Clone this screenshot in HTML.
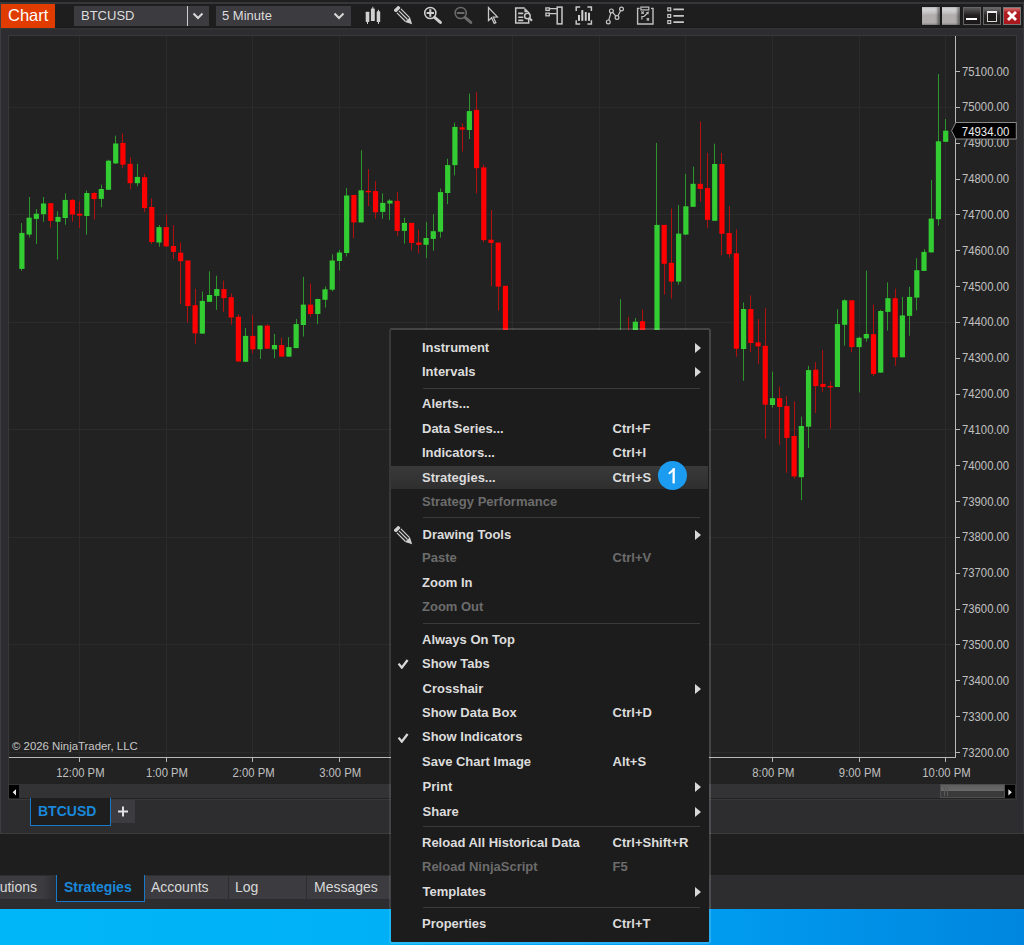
<!DOCTYPE html>
<html><head><meta charset="utf-8">
<style>
*{box-sizing:border-box;margin:0;padding:0}
html,body{width:1024px;height:945px;overflow:hidden;background:#1e1e1e;font-family:"Liberation Sans",sans-serif;position:relative}
.abs{position:absolute}
#top{position:absolute;left:0;top:0;width:1024px;height:3px;background:#1f1f1f}
#topline{position:absolute;left:0;top:2px;width:1024px;height:2px;background:#35363a}
#leftline{position:absolute;left:0;top:2px;width:1px;height:832px;background:#3a3d42}
#toolbar{position:absolute;left:1px;top:4px;width:1022px;height:23px;background:#1e1e1e}
#chartlbl{position:absolute;left:1px;top:3.8px;width:54px;height:24.2px;background:#e03c00;color:#fff;font-size:16.5px;line-height:22.8px;padding-left:7px}
.dd{position:absolute;top:6px;height:20px;background:#3c3b40;color:#dcdcdc;font-size:13px;line-height:20px}
.chev{position:absolute;top:0;width:12px;height:20px}
#panel{position:absolute;left:1px;top:27px;width:1022px;height:806px;background:#2d2d30;border-top:1px solid #1a1a1a;box-shadow:inset 0 1.5px 0 #343437}
#rightedge{position:absolute;left:1023px;top:2px;width:1px;height:831px;background:#36383c}
#chart{position:absolute;left:8px;top:35px;width:1009px;height:764.5px;background:#222222;border:1px solid #38383b}
#svg{position:absolute;left:0;top:0}
#axisv{position:absolute;left:955px;top:36px;width:1px;height:722px;background:#b8b8b8}
#axish{position:absolute;left:9px;top:757px;width:947px;height:1px;background:#b8b8b8}
.pl{position:absolute;left:962px;height:14px;line-height:14px;font-size:11.3px;color:#c0c0c0;transform:scaleY(1.1);transform-origin:0 78%}
.tk{position:absolute;left:955px;width:5px;height:1px;background:#b8b8b8}
.tl{position:absolute;top:765.8px;width:80px;text-align:center;height:15px;line-height:15px;font-size:11.3px;color:#c0c0c0;transform:scaleY(1.1);transform-origin:0 80%}
.ttk{position:absolute;top:757px;width:1px;height:4.5px;background:#b8b8b8}
#copy{position:absolute;left:12px;top:739px;font-size:11.4px;color:#c8c8c8;line-height:15px}
#pricebox{position:absolute;left:950.5px;top:122px;width:67px;height:18px}
#scroll{position:absolute;left:9px;top:784px;width:1007px;height:14px;background:#333336}
#sl{position:absolute;left:9px;top:785px;width:10px;height:13px;background:#000}
#sr{position:absolute;left:1005px;top:785px;width:10px;height:13px;background:#000}
#thumb{position:absolute;left:940px;top:784px;width:65px;height:14px;border:1px solid #4e4e4e;background:linear-gradient(#5e5e5e,#6a6a6a 50%,#3a3a3a 52%,#3a3a3a)}
#tab1{position:absolute;left:30px;top:798px;width:81px;height:28px;background:#1e1e1e;border:1px solid #1a78c8;border-top:none;color:#1a88da;font-weight:bold;font-size:14px;line-height:27px;padding-left:7px}
#tabplus{position:absolute;left:111px;top:799.5px;width:24px;height:23px;background:#3c3c40}
#panelbot{position:absolute;left:0;top:832.5px;width:1024px;height:1px;background:#3c3c3f}
#btabs{position:absolute;left:0;top:875px;width:1024px;height:34px;background:#2d2d30}
.bt{position:absolute;top:876px;height:23px;background:#3c3c40;color:#d8d8d8;font-size:14px;line-height:22px}
#btstrat{position:absolute;left:56px;top:875px;width:89px;height:27px;background:#1e1e1e;border:1px solid #1a78c8;border-top:none;color:#1a88da;font-weight:bold;font-size:14px;line-height:25px;padding-left:7px}
#desk{position:absolute;left:0;top:909px;width:1024px;height:36px;background:linear-gradient(90deg,#00b6f8 0%,#00b0f6 38%,#009cf0 69%,#0086de 100%)}
#menu{position:absolute;left:389px;top:328px;width:322px;height:616px;background:#1c1c1c;border:2px solid rgba(255,255,255,0.16);border-left-color:rgba(255,255,255,0.1);border-radius:3px;background-clip:padding-box}
.mi{position:absolute;left:31px;height:16px;line-height:16px;font-size:13px;font-weight:bold;color:#dcdcdc;white-space:nowrap}
.mi.dis{color:#6c6c6c}
.mi.style2{left:31.6px}
.mi.sc{left:221.5px}
.msep{position:absolute;left:32px;width:277px;height:1px;background:#3a3a3a}
.marr{position:absolute;left:304px;width:0;height:0;border-left:6px solid #d8d8d8;border-top:5.5px solid transparent;border-bottom:5.5px solid transparent}
.mchk{position:absolute;left:6px}
.mhl{position:absolute;left:0;width:317px;height:22.5px;background:linear-gradient(#3a3a3a,#2e2e2e)}
.badge{position:absolute;left:268px;width:29px;height:29px;border-radius:50%;background:#1c9cf0;color:#fff;font-size:19px;line-height:28px;text-align:center}
.ic{position:absolute;top:6px}
.wb{position:absolute;top:7px;width:17.5px;height:17.5px}
</style></head><body>
<div id="top"></div>
<div id="topline"></div>
<div id="toolbar"></div>
<div id="leftline"></div>
<div id="rightedge"></div>
<div id="panel"></div>
<div id="chartlbl">Chart</div>
<div class="dd" style="left:74px;width:135px;padding-left:7px">BTCUSD</div>
<div class="abs" style="left:187px;top:6px;width:1px;height:20px;background:#cfcfcf"></div>
<svg class="abs" style="left:192px;top:10px" width="12" height="12" viewBox="0 0 12 12"><path d="M1.5 3.5 L6 8 L10.5 3.5" stroke="#d8d8d8" stroke-width="2" fill="none"/></svg>
<div class="dd" style="left:216px;width:135px;padding-left:6px">5 Minute</div>
<svg class="abs" style="left:333px;top:10px" width="12" height="12" viewBox="0 0 12 12"><path d="M1.5 3.5 L6 8 L10.5 3.5" stroke="#d8d8d8" stroke-width="2" fill="none"/></svg>

<!-- toolbar icons -->
<svg class="ic" style="left:364px" width="18" height="20" viewBox="0 0 18 20">
 <g fill="#d0d0d0"><rect x="1.7" y="5.7" width="3.6" height="10.2" rx="0.6"/><rect x="3" y="14" width="1" height="4"/>
 <rect x="6.9" y="2.5" width="3.9" height="12.5" rx="0.6"/><rect x="8.35" y="0.8" width="1" height="3"/>
 <rect x="12.7" y="5.2" width="3.5" height="10.9" rx="0.6"/><rect x="13.95" y="3.8" width="1" height="14.2"/></g></svg>
<svg class="ic" style="left:394px;top:6px" width="20" height="20" viewBox="0 0 20 20"><g transform="rotate(45 10 10)"><rect x="-1.5" y="6.6" width="3.5" height="6.8" rx="1.3" fill="#d0d0d0"/><path d="M2.8 7.2 H15 M2.8 10 H15 M2.8 12.8 H15" stroke="#d0d0d0" stroke-width="1.2"/><path d="M15 6.6 L21.5 10 L15 13.4Z" fill="#d0d0d0"/></g></svg>
<svg class="ic" style="left:423px" width="20" height="20" viewBox="0 0 20 20">
 <circle cx="7.3" cy="7" r="5.6" fill="none" stroke="#d0d0d0" stroke-width="1.5"/><path d="M3.6 7 H11 M7.3 3.2 V10.8" stroke="#d0d0d0" stroke-width="2"/><path d="M11.6 11.3 L17.4 16.4" stroke="#d0d0d0" stroke-width="3" stroke-linecap="round"/></svg>
<svg class="ic" style="left:453px" width="20" height="20" viewBox="0 0 20 20">
 <circle cx="7.7" cy="7" r="5.6" fill="none" stroke="#6a6a6a" stroke-width="1.5"/><path d="M3.8 7 H11.4" stroke="#6a6a6a" stroke-width="2"/><path d="M12 11.3 L17.8 16.4" stroke="#6a6a6a" stroke-width="3" stroke-linecap="round"/></svg>
<svg class="ic" style="left:487px" width="14" height="20" viewBox="0 0 14 20">
 <path d="M1.5 1.6 V14.6 L4.6 11.8 L7.2 17.4 L8.8 16.6 L6.3 11.2 L10.4 10.9 Z" fill="none" stroke="#c8c8c8" stroke-width="1.3" stroke-linejoin="miter"/></svg>
<svg class="ic" style="left:514px" width="20" height="20" viewBox="0 0 20 20">
 <path d="M10.6 2.1 H1.7 V17.1 H14.7 V6" fill="none" stroke="#c8c8c8" stroke-width="1.5"/><path d="M10.4 1.4 L15.3 6.2 H10.4 Z" fill="#c8c8c8"/><path d="M4.2 7.4 H9.3 M4.2 11.3 H9.3 M4.2 14.4 H9.3" stroke="#c8c8c8" stroke-width="1.6"/><circle cx="13.4" cy="10" r="2.8" fill="#1e1e1e" stroke="#c8c8c8" stroke-width="1.5"/><path d="M15.3 12 L18 14.8" stroke="#c8c8c8" stroke-width="2"/></svg>
<svg class="ic" style="left:544px" width="20" height="20" viewBox="0 0 20 20">
 <rect x="1.9" y="1.9" width="3.4" height="2.5" fill="none" stroke="#c8c8c8" stroke-width="1.3"/><rect x="1.9" y="7.1" width="3.4" height="2.7" fill="none" stroke="#c8c8c8" stroke-width="1.3"/><path d="M5.6 2.6 H12.8 M5.6 7.7 H12.8" stroke="#c8c8c8" stroke-width="1.3"/><rect x="13.2" y="1.1" width="4.8" height="16.8" fill="none" stroke="#c8c8c8" stroke-width="1.5"/></svg>
<svg class="ic" style="left:575px" width="20" height="20" viewBox="0 0 20 20">
 <path d="M1.2 5 V1.1 H5.2 M12.4 1.1 H16.4 V5 M16.4 14.2 V18 H12.4 M5.2 18 H1.2 V14.2" fill="none" stroke="#c8c8c8" stroke-width="1.5"/><rect x="3" y="9" width="2" height="5.8" fill="#d0d0d0"/><rect x="6.3" y="4.1" width="2" height="10.7" fill="#d0d0d0"/><rect x="9.8" y="6" width="1.9" height="8.8" fill="#d0d0d0"/><rect x="13" y="6.8" width="2" height="8" fill="#d0d0d0"/></svg>
<svg class="ic" style="left:605px" width="20" height="20" viewBox="0 0 20 20">
 <path d="M3.3 15.9 L6.4 4.9 L12 11.5 L16.5 3" fill="none" stroke="#c8c8c8" stroke-width="1.2"/><circle cx="3.3" cy="15.9" r="1.9" fill="#1e1e1e" stroke="#c8c8c8" stroke-width="1.2"/><circle cx="6.4" cy="4.9" r="1.9" fill="#1e1e1e" stroke="#c8c8c8" stroke-width="1.2"/><circle cx="12" cy="11.5" r="1.9" fill="#1e1e1e" stroke="#c8c8c8" stroke-width="1.2"/><circle cx="16.5" cy="3" r="1.9" fill="#1e1e1e" stroke="#c8c8c8" stroke-width="1.2"/></svg>
<svg class="ic" style="left:636px" width="20" height="20" viewBox="0 0 20 20">
 <path d="M3.6 2.4 H1.6 V18 H17 V2.4 H15" fill="none" stroke="#c0c0c0" stroke-width="1.4"/><rect x="4.9" y="1.1" width="7.9" height="2.8" fill="none" stroke="#c0c0c0" stroke-width="1.2"/><path d="M5.4 5.5 L7.8 7.9 M7.8 5.5 L5.4 7.9 M10.7 12.1 L13.1 14.5 M13.1 12.1 L10.7 14.5" stroke="#c0c0c0" stroke-width="1.1"/><path d="M5.9 13.4 V10.5 H8 L11.6 7" fill="none" stroke="#c0c0c0" stroke-width="1.2"/><path d="M13 5.6 L9.9 6.3 L12.3 8.7Z" fill="#c0c0c0"/></svg>
<svg class="ic" style="left:666px" width="20" height="20" viewBox="0 0 20 20">
 <rect x="1.8" y="1.9" width="2.9" height="2.9" fill="none" stroke="#c8c8c8" stroke-width="1.2"/><rect x="1.8" y="8.5" width="2.9" height="2.9" fill="none" stroke="#c8c8c8" stroke-width="1.2"/><rect x="1.8" y="14.6" width="2.9" height="2.9" fill="none" stroke="#c8c8c8" stroke-width="1.2"/><path d="M7.4 3.3 H17.9 M7.4 9.9 H17.9 M7.4 16.1 H17.9" stroke="#c8c8c8" stroke-width="1.7"/></svg>

<!-- window buttons -->
<div class="wb" style="left:922px;top:6.8px;width:18px;height:18px;background:linear-gradient(#e0e0e0,#c6c4c4 30%,#b1adad 45%,#b1adad 88%,#9c9898);box-shadow:inset -2.5px 0 2.5px rgba(0,0,0,0.45),0 0 1px #111"></div>
<div class="wb" style="left:942.3px;top:6.8px;width:17.8px;height:18px;background:linear-gradient(#e0e0e0,#c6c4c4 30%,#b1adad 45%,#b1adad 88%,#9c9898);box-shadow:inset -2.5px 0 2.5px rgba(0,0,0,0.45),0 0 1px #111"></div>
<div class="wb" style="left:963px;background:linear-gradient(#5a5a5a,#231f20 45%,#1a1718);border:1px solid #666"><div class="abs" style="left:2px;top:10px;width:10.8px;height:2.2px;background:#fff"></div></div>
<div class="wb" style="left:983px;background:linear-gradient(#6a6a6a,#2a2727 45%,#1f1c1c);border:1px solid #666"><div class="abs" style="left:2.8px;top:2.7px;width:10.6px;height:11px;border:1.5px solid #d8d8d8;border-top:2.5px solid #f0f0f0;background:#1e1b1b"></div></div>
<div class="wb" style="left:1003px;background:linear-gradient(#d07070,#b21e22 28%,#a8181c);border:1px solid #777"><svg class="abs" style="left:2px;top:2px" width="12" height="12" viewBox="0 0 12 12"><path d="M2 2 L10 10 M10 2 L2 10" stroke="#fff" stroke-width="2.9"/></svg></div>

<div id="chart"></div>
<svg id="svg" width="1024" height="800">
<rect x="79" y="36" width="1" height="721" fill="#2b2b2b"/>
<rect x="166" y="36" width="1" height="721" fill="#2b2b2b"/>
<rect x="252" y="36" width="1" height="721" fill="#2b2b2b"/>
<rect x="339" y="36" width="1" height="721" fill="#2b2b2b"/>
<rect x="426" y="36" width="1" height="721" fill="#2b2b2b"/>
<rect x="512" y="36" width="1" height="721" fill="#2b2b2b"/>
<rect x="599" y="36" width="1" height="721" fill="#2b2b2b"/>
<rect x="685" y="36" width="1" height="721" fill="#2b2b2b"/>
<rect x="772" y="36" width="1" height="721" fill="#2b2b2b"/>
<rect x="859" y="36" width="1" height="721" fill="#2b2b2b"/>
<rect x="945" y="36" width="1" height="721" fill="#2b2b2b"/>
<rect x="9" y="107" width="946" height="1" fill="#2b2b2b"/>
<rect x="9" y="214" width="946" height="1" fill="#2b2b2b"/>
<rect x="9" y="322" width="946" height="1" fill="#2b2b2b"/>
<rect x="9" y="429" width="946" height="1" fill="#2b2b2b"/>
<rect x="9" y="537" width="946" height="1" fill="#2b2b2b"/>
<rect x="9" y="644" width="946" height="1" fill="#2b2b2b"/>
<rect x="9" y="752" width="946" height="1" fill="#2b2b2b"/>
<rect x="21" y="223.0" width="1" height="47.7" fill="#2c962c"/>
<rect x="19.30" y="232.9" width="5.2" height="36.0" fill="#33cc33"/>
<rect x="29" y="197.0" width="1" height="40.5" fill="#2c962c"/>
<rect x="26.52" y="217.7" width="5.2" height="16.9" fill="#33cc33"/>
<rect x="36" y="209.0" width="1" height="34.9" fill="#2c962c"/>
<rect x="33.73" y="213.7" width="5.2" height="5.2" fill="#33cc33"/>
<rect x="43" y="197.0" width="1" height="24.8" fill="#2c962c"/>
<rect x="40.95" y="203.5" width="5.2" height="10.7" fill="#33cc33"/>
<rect x="50" y="203.0" width="1" height="24.6" fill="#b01010"/>
<rect x="48.17" y="203.2" width="5.2" height="17.7" fill="#ff0000"/>
<rect x="57" y="211.3" width="1" height="48.3" fill="#2c962c"/>
<rect x="55.38" y="216.9" width="5.2" height="4.9" fill="#33cc33"/>
<rect x="65" y="193.3" width="1" height="31.4" fill="#2c962c"/>
<rect x="62.60" y="199.9" width="5.2" height="18.1" fill="#33cc33"/>
<rect x="72" y="199.1" width="1" height="22.7" fill="#b01010"/>
<rect x="69.82" y="199.9" width="5.2" height="14.6" fill="#ff0000"/>
<rect x="79" y="201.2" width="1" height="26.8" fill="#b01010"/>
<rect x="77.04" y="213.7" width="5.2" height="1.9" fill="#ff0000"/>
<rect x="86" y="190.4" width="1" height="44.2" fill="#2c962c"/>
<rect x="84.25" y="193.0" width="5.2" height="23.0" fill="#33cc33"/>
<rect x="94" y="192.1" width="1" height="27.4" fill="#b01010"/>
<rect x="91.47" y="193.0" width="5.2" height="6.1" fill="#ff0000"/>
<rect x="101" y="184.6" width="1" height="22.7" fill="#2c962c"/>
<rect x="98.69" y="189.0" width="5.2" height="9.9" fill="#33cc33"/>
<rect x="108" y="159.7" width="1" height="30.1" fill="#2c962c"/>
<rect x="105.90" y="160.7" width="5.2" height="29.1" fill="#33cc33"/>
<rect x="115" y="135.6" width="1" height="28.4" fill="#2c962c"/>
<rect x="113.12" y="143.5" width="5.2" height="19.9" fill="#33cc33"/>
<rect x="122" y="133.6" width="1" height="34.4" fill="#b01010"/>
<rect x="120.34" y="142.9" width="5.2" height="21.8" fill="#ff0000"/>
<rect x="130" y="157.1" width="1" height="32.1" fill="#b01010"/>
<rect x="127.56" y="163.8" width="5.2" height="19.4" fill="#ff0000"/>
<rect x="137" y="163.8" width="1" height="22.3" fill="#2c962c"/>
<rect x="134.77" y="176.9" width="5.2" height="6.3" fill="#33cc33"/>
<rect x="144" y="173.9" width="1" height="38.4" fill="#b01010"/>
<rect x="141.99" y="177.2" width="5.2" height="30.9" fill="#ff0000"/>
<rect x="151" y="198.4" width="1" height="45.6" fill="#b01010"/>
<rect x="149.21" y="207.0" width="5.2" height="35.0" fill="#ff0000"/>
<rect x="159" y="225.0" width="1" height="21.7" fill="#2c962c"/>
<rect x="156.42" y="227.1" width="5.2" height="15.4" fill="#33cc33"/>
<rect x="166" y="214.3" width="1" height="32.4" fill="#b01010"/>
<rect x="163.64" y="227.1" width="5.2" height="19.3" fill="#ff0000"/>
<rect x="173" y="225.3" width="1" height="33.8" fill="#b01010"/>
<rect x="170.86" y="246.0" width="5.2" height="5.9" fill="#ff0000"/>
<rect x="180" y="242.6" width="1" height="61.4" fill="#b01010"/>
<rect x="178.07" y="252.7" width="5.2" height="8.5" fill="#ff0000"/>
<rect x="187" y="260.5" width="1" height="62.1" fill="#b01010"/>
<rect x="185.29" y="260.5" width="5.2" height="45.5" fill="#ff0000"/>
<rect x="195" y="288.8" width="1" height="54.9" fill="#b01010"/>
<rect x="192.51" y="305.2" width="5.2" height="28.1" fill="#ff0000"/>
<rect x="202" y="291.6" width="1" height="42.0" fill="#2c962c"/>
<rect x="199.72" y="300.9" width="5.2" height="32.7" fill="#33cc33"/>
<rect x="209" y="271.3" width="1" height="30.5" fill="#2c962c"/>
<rect x="206.94" y="295.0" width="5.2" height="6.8" fill="#33cc33"/>
<rect x="216" y="275.7" width="1" height="34.2" fill="#2c962c"/>
<rect x="214.16" y="289.1" width="5.2" height="6.8" fill="#33cc33"/>
<rect x="223" y="280.6" width="1" height="31.3" fill="#b01010"/>
<rect x="221.38" y="289.1" width="5.2" height="9.0" fill="#ff0000"/>
<rect x="231" y="293.3" width="1" height="31.3" fill="#b01010"/>
<rect x="228.59" y="297.2" width="5.2" height="20.3" fill="#ff0000"/>
<rect x="238" y="314.1" width="1" height="47.4" fill="#b01010"/>
<rect x="235.81" y="316.7" width="5.2" height="44.8" fill="#ff0000"/>
<rect x="245" y="328.0" width="1" height="33.8" fill="#2c962c"/>
<rect x="243.03" y="335.9" width="5.2" height="25.9" fill="#33cc33"/>
<rect x="252" y="315.2" width="1" height="38.3" fill="#b01010"/>
<rect x="250.24" y="335.9" width="5.2" height="13.4" fill="#ff0000"/>
<rect x="260" y="325.3" width="1" height="33.7" fill="#2c962c"/>
<rect x="257.46" y="325.6" width="5.2" height="23.7" fill="#33cc33"/>
<rect x="267" y="324.3" width="1" height="24.4" fill="#b01010"/>
<rect x="264.68" y="325.6" width="5.2" height="23.1" fill="#ff0000"/>
<rect x="274" y="334.0" width="1" height="24.2" fill="#2c962c"/>
<rect x="271.89" y="345.0" width="5.2" height="4.3" fill="#33cc33"/>
<rect x="281" y="337.7" width="1" height="18.9" fill="#b01010"/>
<rect x="279.11" y="345.0" width="5.2" height="11.6" fill="#ff0000"/>
<rect x="288" y="337.1" width="1" height="19.5" fill="#2c962c"/>
<rect x="286.33" y="347.1" width="5.2" height="9.5" fill="#33cc33"/>
<rect x="296" y="318.9" width="1" height="29.2" fill="#2c962c"/>
<rect x="293.55" y="324.1" width="5.2" height="24.0" fill="#33cc33"/>
<rect x="303" y="276.9" width="1" height="59.6" fill="#2c962c"/>
<rect x="300.76" y="304.6" width="5.2" height="20.4" fill="#33cc33"/>
<rect x="310" y="283.6" width="1" height="33.2" fill="#b01010"/>
<rect x="307.98" y="304.6" width="5.2" height="9.4" fill="#ff0000"/>
<rect x="317" y="298.8" width="1" height="25.3" fill="#2c962c"/>
<rect x="315.20" y="299.0" width="5.2" height="15.0" fill="#33cc33"/>
<rect x="325" y="286.4" width="1" height="21.2" fill="#2c962c"/>
<rect x="322.41" y="289.3" width="5.2" height="10.5" fill="#33cc33"/>
<rect x="332" y="254.2" width="1" height="37.2" fill="#2c962c"/>
<rect x="329.63" y="260.5" width="5.2" height="29.2" fill="#33cc33"/>
<rect x="339" y="250.0" width="1" height="20.6" fill="#2c962c"/>
<rect x="336.85" y="252.5" width="5.2" height="8.5" fill="#33cc33"/>
<rect x="346" y="187.9" width="1" height="68.5" fill="#2c962c"/>
<rect x="344.06" y="195.5" width="5.2" height="57.5" fill="#33cc33"/>
<rect x="353" y="195.0" width="1" height="43.1" fill="#b01010"/>
<rect x="351.28" y="195.0" width="5.2" height="27.4" fill="#ff0000"/>
<rect x="361" y="150.2" width="1" height="72.2" fill="#2c962c"/>
<rect x="358.50" y="190.3" width="5.2" height="32.1" fill="#33cc33"/>
<rect x="368" y="169.1" width="1" height="36.9" fill="#b01010"/>
<rect x="365.72" y="190.8" width="5.2" height="1.5" fill="#ff0000"/>
<rect x="375" y="181.0" width="1" height="37.7" fill="#b01010"/>
<rect x="372.93" y="191.1" width="5.2" height="21.2" fill="#ff0000"/>
<rect x="382" y="193.3" width="1" height="25.4" fill="#2c962c"/>
<rect x="380.15" y="202.9" width="5.2" height="9.0" fill="#33cc33"/>
<rect x="389" y="199.2" width="1" height="20.7" fill="#2c962c"/>
<rect x="387.37" y="200.6" width="5.2" height="2.9" fill="#33cc33"/>
<rect x="397" y="192.0" width="1" height="44.1" fill="#b01010"/>
<rect x="394.58" y="200.9" width="5.2" height="30.0" fill="#ff0000"/>
<rect x="404" y="217.8" width="1" height="25.8" fill="#2c962c"/>
<rect x="401.80" y="222.9" width="5.2" height="8.0" fill="#33cc33"/>
<rect x="411" y="222.9" width="1" height="27.4" fill="#b01010"/>
<rect x="409.02" y="222.9" width="5.2" height="20.0" fill="#ff0000"/>
<rect x="418" y="229.9" width="1" height="23.4" fill="#b01010"/>
<rect x="416.23" y="242.5" width="5.2" height="2.3" fill="#ff0000"/>
<rect x="426" y="222.1" width="1" height="35.9" fill="#2c962c"/>
<rect x="423.45" y="238.0" width="5.2" height="6.8" fill="#33cc33"/>
<rect x="433" y="214.2" width="1" height="36.4" fill="#2c962c"/>
<rect x="430.67" y="231.2" width="5.2" height="7.7" fill="#33cc33"/>
<rect x="440" y="188.5" width="1" height="49.1" fill="#2c962c"/>
<rect x="437.89" y="192.1" width="5.2" height="39.6" fill="#33cc33"/>
<rect x="447" y="158.8" width="1" height="45.4" fill="#2c962c"/>
<rect x="445.10" y="165.1" width="5.2" height="27.9" fill="#33cc33"/>
<rect x="454" y="122.8" width="1" height="52.6" fill="#2c962c"/>
<rect x="452.32" y="126.9" width="5.2" height="38.2" fill="#33cc33"/>
<rect x="462" y="123.2" width="1" height="28.4" fill="#b01010"/>
<rect x="459.54" y="127.3" width="5.2" height="2.3" fill="#ff0000"/>
<rect x="469" y="93.6" width="1" height="45.4" fill="#2c962c"/>
<rect x="466.75" y="111.1" width="5.2" height="18.9" fill="#33cc33"/>
<rect x="476" y="92.2" width="1" height="101.2" fill="#b01010"/>
<rect x="473.97" y="109.8" width="5.2" height="58.4" fill="#ff0000"/>
<rect x="483" y="164.6" width="1" height="77.6" fill="#b01010"/>
<rect x="481.19" y="167.4" width="5.2" height="72.7" fill="#ff0000"/>
<rect x="491" y="210.0" width="1" height="76.1" fill="#b01010"/>
<rect x="488.40" y="239.7" width="5.2" height="3.2" fill="#ff0000"/>
<rect x="498" y="242.6" width="1" height="68.1" fill="#b01010"/>
<rect x="495.62" y="242.6" width="5.2" height="44.0" fill="#ff0000"/>
<rect x="505" y="285.8" width="1" height="54.2" fill="#b01010"/>
<rect x="502.84" y="285.8" width="5.2" height="54.2" fill="#ff0000"/>
<rect x="620" y="299.3" width="1" height="40.7" fill="#2c962c"/>
<rect x="618.31" y="340.0" width="5.2" height="1.5" fill="#33cc33"/>
<rect x="628" y="316.9" width="1" height="23.1" fill="#b01010"/>
<rect x="625.53" y="340.0" width="5.2" height="1.5" fill="#ff0000"/>
<rect x="635" y="318.0" width="1" height="22.0" fill="#2c962c"/>
<rect x="632.74" y="321.7" width="5.2" height="18.3" fill="#33cc33"/>
<rect x="642" y="309.6" width="1" height="30.4" fill="#b01010"/>
<rect x="639.96" y="321.2" width="5.2" height="18.8" fill="#ff0000"/>
<rect x="656" y="142.9" width="1" height="197.1" fill="#2c962c"/>
<rect x="654.40" y="224.9" width="5.2" height="115.1" fill="#33cc33"/>
<rect x="664" y="224.9" width="1" height="69.6" fill="#b01010"/>
<rect x="661.61" y="224.9" width="5.2" height="38.9" fill="#ff0000"/>
<rect x="671" y="208.6" width="1" height="90.0" fill="#b01010"/>
<rect x="668.83" y="262.8" width="5.2" height="18.8" fill="#ff0000"/>
<rect x="678" y="204.9" width="1" height="79.8" fill="#2c962c"/>
<rect x="676.05" y="233.6" width="5.2" height="48.0" fill="#33cc33"/>
<rect x="685" y="174.0" width="1" height="60.6" fill="#2c962c"/>
<rect x="683.26" y="206.3" width="5.2" height="28.3" fill="#33cc33"/>
<rect x="693" y="166.7" width="1" height="40.1" fill="#2c962c"/>
<rect x="690.48" y="183.8" width="5.2" height="23.0" fill="#33cc33"/>
<rect x="700" y="121.6" width="1" height="80.1" fill="#b01010"/>
<rect x="697.70" y="183.8" width="5.2" height="5.1" fill="#ff0000"/>
<rect x="707" y="152.9" width="1" height="75.4" fill="#b01010"/>
<rect x="704.91" y="188.1" width="5.2" height="31.7" fill="#ff0000"/>
<rect x="714" y="143.7" width="1" height="77.1" fill="#2c962c"/>
<rect x="712.13" y="164.0" width="5.2" height="56.8" fill="#33cc33"/>
<rect x="721" y="152.9" width="1" height="102.3" fill="#b01010"/>
<rect x="719.35" y="164.0" width="5.2" height="69.8" fill="#ff0000"/>
<rect x="729" y="206.0" width="1" height="51.6" fill="#b01010"/>
<rect x="726.57" y="233.0" width="5.2" height="21.1" fill="#ff0000"/>
<rect x="736" y="229.4" width="1" height="127.3" fill="#b01010"/>
<rect x="733.78" y="253.3" width="5.2" height="95.4" fill="#ff0000"/>
<rect x="743" y="302.5" width="1" height="78.2" fill="#2c962c"/>
<rect x="741.00" y="309.0" width="5.2" height="40.0" fill="#33cc33"/>
<rect x="750" y="295.3" width="1" height="56.8" fill="#b01010"/>
<rect x="748.22" y="309.0" width="5.2" height="34.0" fill="#ff0000"/>
<rect x="758" y="319.1" width="1" height="44.9" fill="#b01010"/>
<rect x="755.43" y="342.4" width="5.2" height="4.0" fill="#ff0000"/>
<rect x="765" y="308.3" width="1" height="130.5" fill="#b01010"/>
<rect x="762.65" y="345.8" width="5.2" height="58.9" fill="#ff0000"/>
<rect x="772" y="371.7" width="1" height="36.0" fill="#2c962c"/>
<rect x="769.87" y="398.2" width="5.2" height="6.8" fill="#33cc33"/>
<rect x="779" y="386.7" width="1" height="58.0" fill="#b01010"/>
<rect x="777.08" y="398.2" width="5.2" height="8.8" fill="#ff0000"/>
<rect x="786" y="396.3" width="1" height="76.5" fill="#b01010"/>
<rect x="784.30" y="406.1" width="5.2" height="31.8" fill="#ff0000"/>
<rect x="794" y="401.3" width="1" height="77.2" fill="#b01010"/>
<rect x="791.52" y="436.0" width="5.2" height="40.4" fill="#ff0000"/>
<rect x="801" y="416.6" width="1" height="83.6" fill="#2c962c"/>
<rect x="798.74" y="426.0" width="5.2" height="51.2" fill="#33cc33"/>
<rect x="808" y="365.8" width="1" height="82.1" fill="#2c962c"/>
<rect x="805.95" y="370.1" width="5.2" height="56.6" fill="#33cc33"/>
<rect x="815" y="362.1" width="1" height="50.8" fill="#b01010"/>
<rect x="813.17" y="369.7" width="5.2" height="16.4" fill="#ff0000"/>
<rect x="822" y="350.1" width="1" height="41.7" fill="#b01010"/>
<rect x="820.39" y="383.9" width="5.2" height="3.1" fill="#ff0000"/>
<rect x="830" y="381.2" width="1" height="47.6" fill="#b01010"/>
<rect x="827.60" y="386.0" width="5.2" height="1.5" fill="#ff0000"/>
<rect x="837" y="309.2" width="1" height="77.8" fill="#2c962c"/>
<rect x="834.82" y="324.1" width="5.2" height="62.9" fill="#33cc33"/>
<rect x="844" y="299.2" width="1" height="46.5" fill="#2c962c"/>
<rect x="842.04" y="300.3" width="5.2" height="24.5" fill="#33cc33"/>
<rect x="851" y="300.3" width="1" height="52.0" fill="#b01010"/>
<rect x="849.25" y="300.3" width="5.2" height="46.8" fill="#ff0000"/>
<rect x="859" y="336.7" width="1" height="55.8" fill="#2c962c"/>
<rect x="856.47" y="337.8" width="5.2" height="9.3" fill="#33cc33"/>
<rect x="866" y="270.7" width="1" height="70.9" fill="#2c962c"/>
<rect x="863.69" y="334.0" width="5.2" height="4.4" fill="#33cc33"/>
<rect x="873" y="304.6" width="1" height="71.4" fill="#b01010"/>
<rect x="870.91" y="334.2" width="5.2" height="39.7" fill="#ff0000"/>
<rect x="880" y="309.9" width="1" height="62.7" fill="#2c962c"/>
<rect x="878.12" y="311.0" width="5.2" height="61.6" fill="#33cc33"/>
<rect x="887" y="282.4" width="1" height="48.2" fill="#2c962c"/>
<rect x="885.34" y="298.2" width="5.2" height="13.7" fill="#33cc33"/>
<rect x="895" y="288.7" width="1" height="77.2" fill="#b01010"/>
<rect x="892.56" y="298.2" width="5.2" height="59.1" fill="#ff0000"/>
<rect x="902" y="296.9" width="1" height="60.4" fill="#2c962c"/>
<rect x="899.77" y="315.4" width="5.2" height="41.9" fill="#33cc33"/>
<rect x="909" y="286.8" width="1" height="49.0" fill="#2c962c"/>
<rect x="906.99" y="296.9" width="5.2" height="19.0" fill="#33cc33"/>
<rect x="916" y="258.2" width="1" height="52.0" fill="#2c962c"/>
<rect x="914.21" y="270.2" width="5.2" height="27.4" fill="#33cc33"/>
<rect x="924" y="249.2" width="1" height="21.7" fill="#2c962c"/>
<rect x="921.42" y="251.9" width="5.2" height="19.0" fill="#33cc33"/>
<rect x="931" y="180.1" width="1" height="72.3" fill="#2c962c"/>
<rect x="928.64" y="218.6" width="5.2" height="33.8" fill="#33cc33"/>
<rect x="938" y="74.0" width="1" height="151.5" fill="#2c962c"/>
<rect x="935.86" y="141.3" width="5.2" height="77.9" fill="#33cc33"/>
<rect x="945" y="119.0" width="1" height="22.8" fill="#2c962c"/>
<rect x="943.08" y="130.7" width="5.2" height="11.1" fill="#33cc33"/>
</svg>
<div id="axisv"></div>
<div id="axish"></div>
<div class="pl" style="top:64.5px">75100.00</div>
<div class="tk" style="top:71px"></div>
<div class="pl" style="top:100.3px">75000.00</div>
<div class="tk" style="top:107px"></div>
<div class="pl" style="top:136.2px">74900.00</div>
<div class="tk" style="top:143px"></div>
<div class="pl" style="top:172.0px">74800.00</div>
<div class="tk" style="top:179px"></div>
<div class="pl" style="top:207.9px">74700.00</div>
<div class="tk" style="top:214px"></div>
<div class="pl" style="top:243.7px">74600.00</div>
<div class="tk" style="top:250px"></div>
<div class="pl" style="top:279.5px">74500.00</div>
<div class="tk" style="top:286px"></div>
<div class="pl" style="top:315.4px">74400.00</div>
<div class="tk" style="top:322px"></div>
<div class="pl" style="top:351.2px">74300.00</div>
<div class="tk" style="top:358px"></div>
<div class="pl" style="top:387.1px">74200.00</div>
<div class="tk" style="top:394px"></div>
<div class="pl" style="top:422.9px">74100.00</div>
<div class="tk" style="top:429px"></div>
<div class="pl" style="top:458.7px">74000.00</div>
<div class="tk" style="top:465px"></div>
<div class="pl" style="top:494.6px">73900.00</div>
<div class="tk" style="top:501px"></div>
<div class="pl" style="top:530.4px">73800.00</div>
<div class="tk" style="top:537px"></div>
<div class="pl" style="top:566.3px">73700.00</div>
<div class="tk" style="top:573px"></div>
<div class="pl" style="top:602.1px">73600.00</div>
<div class="tk" style="top:609px"></div>
<div class="pl" style="top:637.9px">73500.00</div>
<div class="tk" style="top:644px"></div>
<div class="pl" style="top:673.8px">73400.00</div>
<div class="tk" style="top:680px"></div>
<div class="pl" style="top:709.6px">73300.00</div>
<div class="tk" style="top:716px"></div>
<div class="pl" style="top:745.5px">73200.00</div>
<div class="tk" style="top:752px"></div>
<svg id="pricebox" width="67" height="18" viewBox="0 0 67 18"><path d="M0.6 8.8 L4.8 0.5 H65.3 V17 H4.8 Z" fill="#000" stroke="#8a8a8a" stroke-width="1"/></svg>
<div class="pl" style="top:124.6px;left:961.8px;color:#ececec;font-size:11.4px">74934.00</div>
<div class="tl" style="left:40.4px">12:00 PM</div>
<div class="ttk" style="left:79px"></div>
<div class="tl" style="left:127.0px">1:00 PM</div>
<div class="ttk" style="left:166px"></div>
<div class="tl" style="left:213.6px">2:00 PM</div>
<div class="ttk" style="left:252px"></div>
<div class="tl" style="left:300.2px">3:00 PM</div>
<div class="ttk" style="left:339px"></div>
<div class="tl" style="left:386.9px">4:00 PM</div>
<div class="ttk" style="left:426px"></div>
<div class="tl" style="left:473.5px">5:00 PM</div>
<div class="ttk" style="left:512px"></div>
<div class="tl" style="left:560.1px">6:00 PM</div>
<div class="ttk" style="left:599px"></div>
<div class="tl" style="left:646.7px">7:00 PM</div>
<div class="ttk" style="left:685px"></div>
<div class="tl" style="left:733.3px">8:00 PM</div>
<div class="ttk" style="left:772px"></div>
<div class="tl" style="left:819.9px">9:00 PM</div>
<div class="ttk" style="left:859px"></div>
<div class="tl" style="left:906.5px">10:00 PM</div>
<div class="ttk" style="left:945px"></div>
<div id="copy">© 2026 NinjaTrader, LLC</div>
<div id="scroll"></div>
<div id="thumb"><div class="abs" style="left:2.5px;top:2px;width:1px;height:9px;background:#5a5a5a"></div><div class="abs" style="left:6px;top:2px;width:1px;height:9px;background:#5a5a5a"></div></div>
<div id="sl"><svg width="10" height="13"><path d="M3.6 6.3 L7 3.3 V9.5Z" fill="#e8e8e8"/></svg></div>
<div id="sr"><svg width="10" height="13"><path d="M6.8 6.3 L3.4 3.3 V9.5Z" fill="#e8e8e8"/></svg></div>
<div id="tab1">BTCUSD</div>
<div id="tabplus"><svg width="24" height="23"><path d="M7 11.5 H17 M12 6.5 V16.5" stroke="#e0e0e0" stroke-width="2"/></svg></div>
<div id="panelbot"></div>
<div id="btabs"></div>
<div class="bt" style="left:0;width:55px;padding-left:0;background:linear-gradient(90deg,#3c3c40 78%,#2e2e32)"><span style="position:absolute;right:18px">utions</span></div>
<div id="btstrat">Strategies</div>
<div class="bt" style="left:145px;width:83px;padding-left:6px">Accounts</div>
<div class="bt" style="left:229px;width:77px;padding-left:6px">Log</div>
<div class="bt" style="left:307px;width:83px;padding-left:7px">Messages</div>
<div id="desk"></div>
<div id="menu">
<svg class="abs" style="left:3px;top:196px" width="20" height="20" viewBox="0 0 20 20"><g transform="rotate(45 10 10)"><rect x="-1.5" y="6.6" width="3.5" height="6.8" rx="1.3" fill="#d0d0d0"/><path d="M2.8 7.2 H15 M2.8 10 H15 M2.8 12.8 H15" stroke="#d0d0d0" stroke-width="1.2"/><path d="M15 6.6 L21.5 10 L15 13.4Z" fill="#d0d0d0"/></g></svg>
<div class="mi" style="top:10.0px">Instrument</div>
<div class="marr" style="top:12.9px"></div>
<div class="mi" style="top:34.2px">Intervals</div>
<div class="marr" style="top:37.1px"></div>
<div class="msep" style="top:58.1px"></div>
<div class="mi" style="top:66.4px">Alerts...</div>
<div class="mi" style="top:90.6px">Data Series...</div>
<div class="mi sc" style="top:90.6px">Ctrl+F</div>
<div class="mi" style="top:114.7px">Indicators...</div>
<div class="mi sc" style="top:114.7px">Ctrl+I</div>
<div class="mhl" style="top:136.2px"></div>
<div class="mi" style="top:139.9px">Strategies...</div>
<div class="mi sc" style="top:139.9px">Ctrl+S</div>
<svg class="abs" style="left:267px;top:130.7px" width="29" height="29" viewBox="0 0 29 29"><circle cx="14.5" cy="14.5" r="14.5" fill="#1b9cf0"/><rect x="14.5" y="7.3" width="2.3" height="15.1" fill="#fff"/><path d="M16 8.2 L11.4 12.2" stroke="#fff" stroke-width="1.9" stroke-linecap="round"/></svg>
<div class="mi dis" style="top:164.0px">Strategy Performance</div>
<div class="msep" style="top:187.0px"></div>
<div class="mi style2" style="top:196.8px">Drawing Tools</div>
<div class="marr" style="top:199.7px"></div>
<div class="mi dis" style="top:220.3px">Paste</div>
<div class="mi dis sc" style="top:220.3px">Ctrl+V</div>
<div class="mi" style="top:245.1px">Zoom In</div>
<div class="mi dis" style="top:269.3px">Zoom Out</div>
<div class="msep" style="top:293.2px"></div>
<div class="mi" style="top:301.5px">Always On Top</div>
<div class="mi" style="top:325.6px">Show Tabs</div>
<svg class="mchk" style="top:327.0px" width="14" height="12" viewBox="0 0 14 12"><path d="M1.6 6.6 L4.8 10.6 L10.6 3" stroke="#d8d8d8" stroke-width="2.3" fill="none"/></svg>
<div class="mi style2" style="top:350.8px">Crosshair</div>
<div class="marr" style="top:353.7px"></div>
<div class="mi" style="top:375.0px">Show Data Box</div>
<div class="mi sc" style="top:375.0px">Ctrl+D</div>
<div class="mi" style="top:399.4px">Show Indicators</div>
<svg class="mchk" style="top:400.8px" width="14" height="12" viewBox="0 0 14 12"><path d="M1.6 6.6 L4.8 10.6 L10.6 3" stroke="#d8d8d8" stroke-width="2.3" fill="none"/></svg>
<div class="mi" style="top:423.9px">Save Chart Image</div>
<div class="mi sc" style="top:423.9px">Alt+S</div>
<div class="mi style2" style="top:449.3px">Print</div>
<div class="marr" style="top:452.2px"></div>
<div class="mi style2" style="top:473.8px">Share</div>
<div class="marr" style="top:476.7px"></div>
<div class="msep" style="top:496.1px"></div>
<div class="mi" style="top:505.1px">Reload All Historical Data</div>
<div class="mi sc" style="top:505.1px">Ctrl+Shift+R</div>
<div class="mi dis" style="top:529.2px">Reload NinjaScript</div>
<div class="mi dis sc" style="top:529.2px">F5</div>
<div class="mi style2" style="top:554.4px">Templates</div>
<div class="marr" style="top:557.3px"></div>
<div class="msep" style="top:577.4px"></div>
<div class="mi" style="top:585.6px">Properties</div>
<div class="mi sc" style="top:585.6px">Ctrl+T</div>
</div>
</body></html>
